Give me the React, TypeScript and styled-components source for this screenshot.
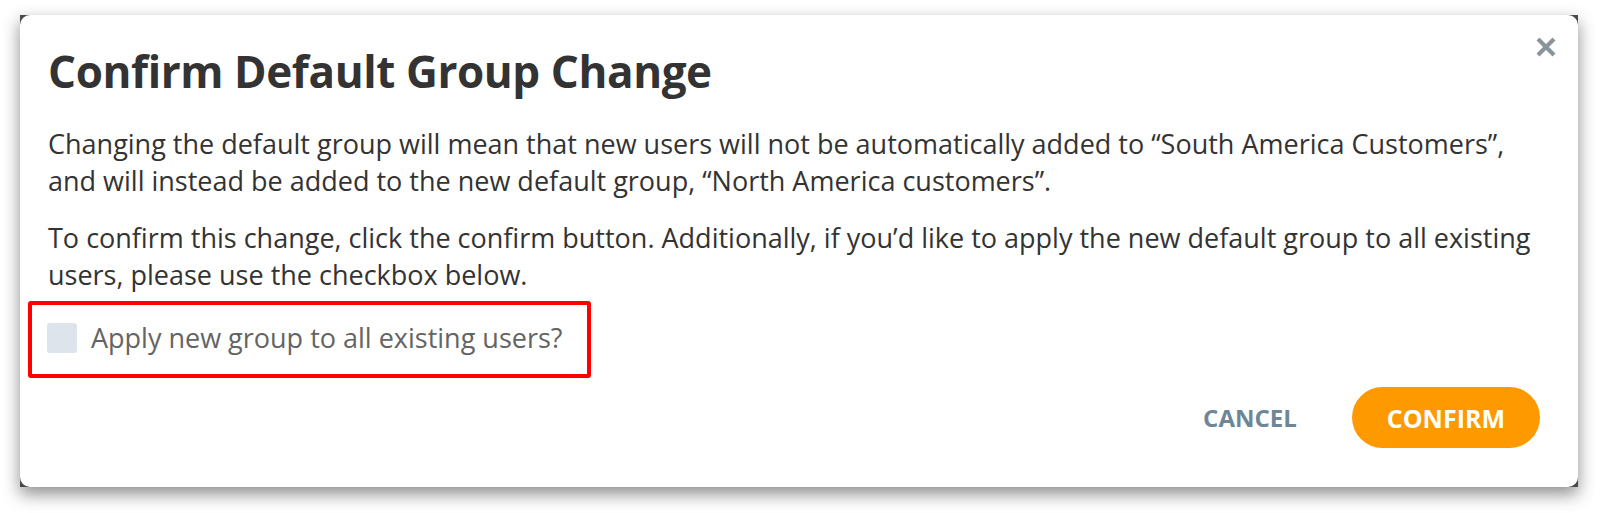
import React from 'react';
import styled, { createGlobalStyle } from 'styled-components';

const GlobalStyle = createGlobalStyle`
  html, body { margin: 0; padding: 0; background: #ffffff; }
  body { font-family: "Open Sans", "Noto Sans", sans-serif; }
  * { box-sizing: border-box; }
`;

const Page = styled.div`
  width: 1600px;
  height: 513px;
  padding: 15px 22px 26px 20px;
`;

const Frame = styled.div`
  height: 100%;
  background: #4a4a4a;
  box-shadow: 0 7px 16px rgba(0, 0, 0, 0.45);
`;

const Dialog = styled.div`
  position: relative;
  height: 100%;
  background: #ffffff;
  border-radius: 10px;
  padding: 30px 38px 0 28px;
  display: flex;
  flex-direction: column;
`;

const CloseButton = styled.button`
  position: absolute;
  top: 20px;
  right: 21px;
  width: 23px;
  height: 23px;
  padding: 0;
  border: none;
  background: none;
  cursor: pointer;
  display: flex;
  align-items: center;
  justify-content: center;
`;

const Title = styled.h1`
  margin: 0;
  font-size: 44px;
  line-height: 52px;
  font-weight: 700;
  letter-spacing: -0.4px;
  color: #333333;
`;

const Paragraph = styled.p<{ $gap: number }>`
  margin: ${(p) => p.$gap}px 0 0;
  font-size: 27px;
  line-height: 37px;
  color: #333333;
  white-space: nowrap;
`;

const Highlight = styled.div`
  margin: 8px 0 0 -20px;
  width: fit-content;
  height: 77px;
  border: 4px solid #ff0000;
  border-radius: 3px;
  padding: 0 25px 0 15px;
  display: flex;
  align-items: center;
  gap: 14px;
`;

const CheckBox = styled.span`
  width: 30px;
  height: 30px;
  margin-top: -4px;
  border-radius: 3px;
  background: #dde4eb;
  flex: none;
`;

const CheckLabel = styled.label`
  font-size: 27px;
  line-height: 34px;
  margin-top: -4px;
  color: #646464;
`;

const Footer = styled.div`
  margin-top: 9px;
  display: flex;
  justify-content: flex-end;
  align-items: center;
`;

const TextButton = styled.button`
  height: 61px;
  padding: 0 55px 0 28px;
  border: none;
  background: none;
  font-family: inherit;
  font-size: 24px;
  font-weight: 700;
  color: #6e8695;
  cursor: pointer;
`;

const PrimaryButton = styled.button`
  height: 61px;
  padding: 0 35px;
  border: none;
  border-radius: 31px;
  background: #ff9900;
  font-family: inherit;
  font-size: 25px;
  font-weight: 700;
  color: #ffffff;
  cursor: pointer;
`;

export default function App() {
  return (
    <>
      <GlobalStyle />
      <Page>
        <Frame>
          <Dialog>
            <CloseButton aria-label="Close">
              <svg width="22" height="22" viewBox="0 0 22 22">
                <path d="M3 3 L19 19 M19 3 L3 19" stroke="#8a959b" strokeWidth="4.2" />
              </svg>
            </CloseButton>
            <Title>Confirm Default Group Change</Title>
            <Paragraph $gap={28}>
              Changing the default group will mean that new users will not be automatically added to “South America Customers”,
              <br />
              and will instead be added to the new default group, “North America customers”.
            </Paragraph>
            <Paragraph $gap={20}>
              To confirm this change, click the confirm button. Additionally, if you’d like to apply the new default group to all existing
              <br />
              users, please use the checkbox below.
            </Paragraph>
            <Highlight>
              <CheckBox />
              <CheckLabel>Apply new group to all existing users?</CheckLabel>
            </Highlight>
            <Footer>
              <TextButton>CANCEL</TextButton>
              <PrimaryButton>CONFIRM</PrimaryButton>
            </Footer>
          </Dialog>
        </Frame>
      </Page>
    </>
  );
}
